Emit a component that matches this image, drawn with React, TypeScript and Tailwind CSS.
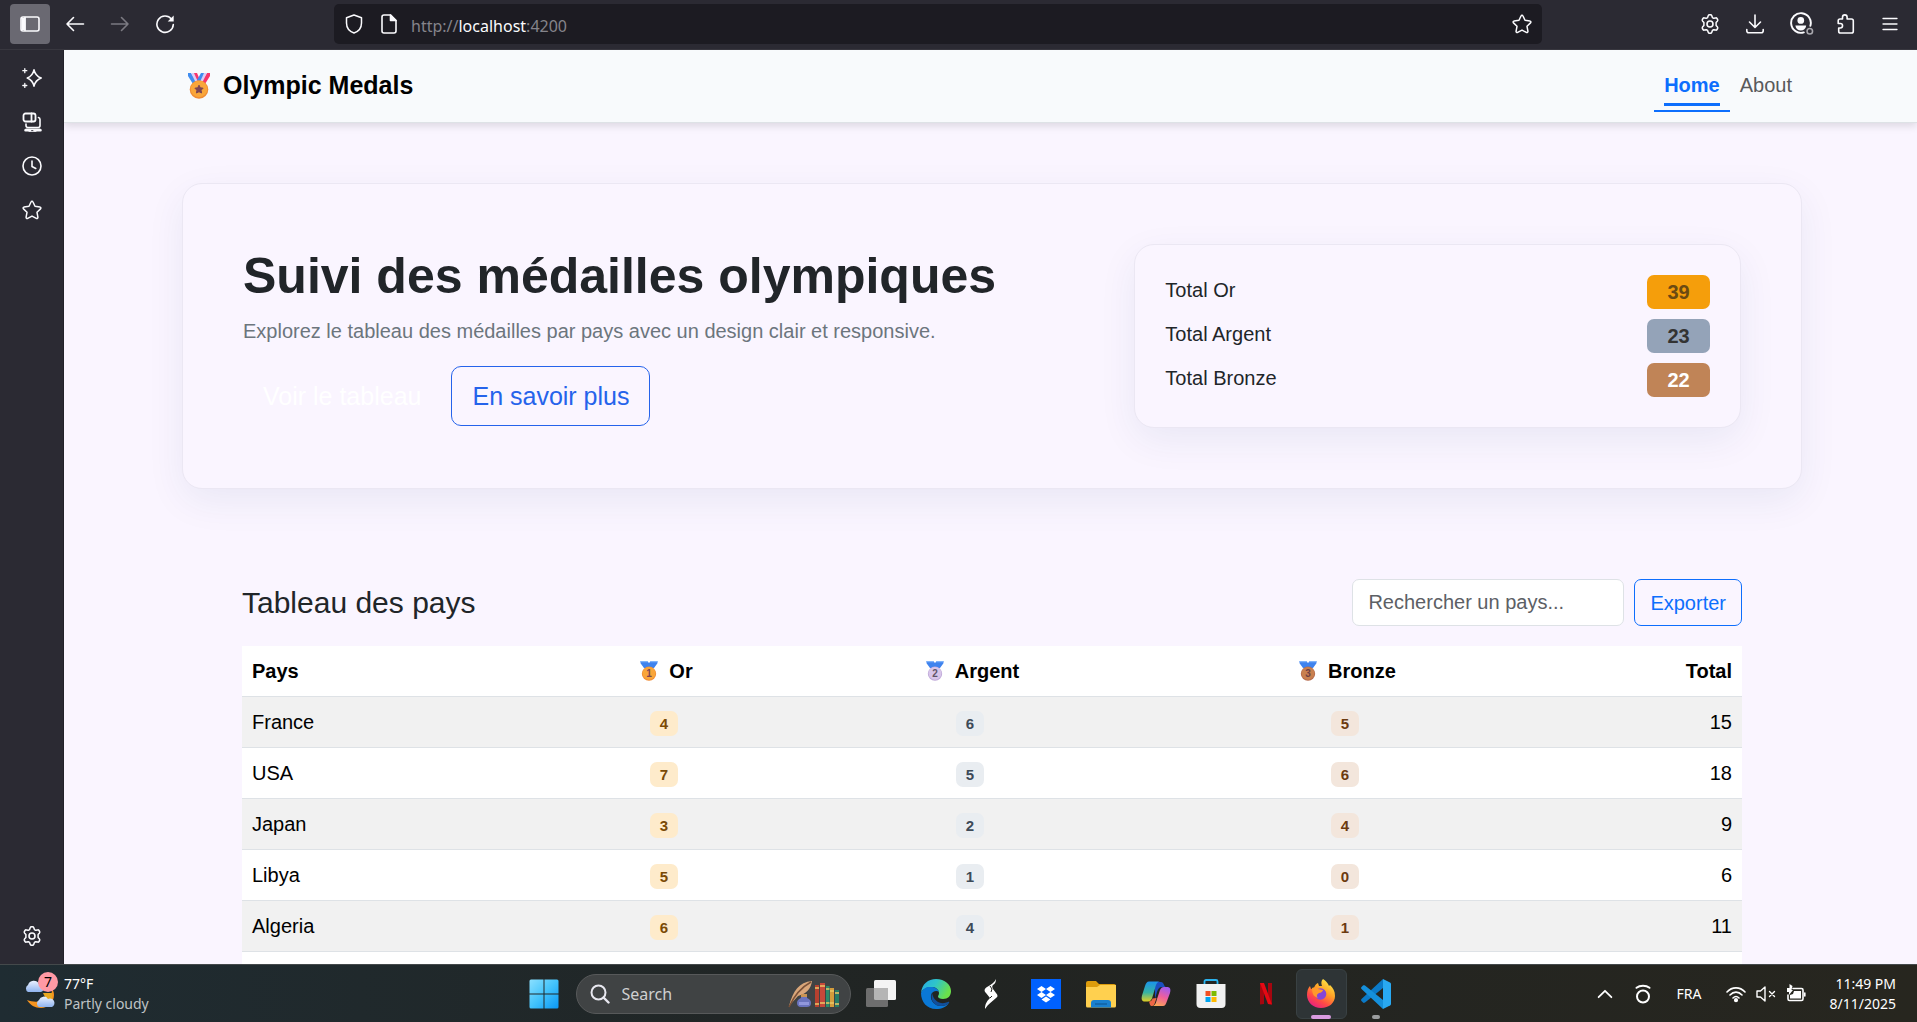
import React, { useState } from "react";

type IconProps = { children: React.ReactNode; size?: string; className?: string };

function Icon({ children, size = "size-5", className = "" }: IconProps) {
  return (
    <svg
      viewBox="0 0 20 20"
      className={`${size} shrink-0 ${className}`}
      fill="none"
      stroke="currentColor"
      strokeWidth="1.6"
      strokeLinecap="round"
      strokeLinejoin="round"
      aria-hidden="true"
    >
      {children}
    </svg>
  );
}

const starPath =
  "M10 1.3c.4 0 .8.2 1 .7l2 4.3 4.900.7c1 .1 1.300 1.200.6 1.900l-3.500 3.400.9 4.900c.2 1-.8 1.700-1.600 1.200L10 16.100l-4.300 2.300c-.8.5-1.800-.2-1.600-1.200l.9-4.900L1.500 8.900c-.7-.7-.4-1.800.6-1.900L7 6.300 9 2c.2-.5.6-.7 1-.7z";

const StarIcon = () => (
  <Icon>
    <path d={starPath} strokeWidth="1.5" />
  </Icon>
);

const GearIcon = () => (
  <Icon>
    <path
      strokeWidth="1.5"
      d="M8.300 1.600c.2-.5.600-.8 1.100-.8h1.200c.5 0 .9.300 1.100.8l.7 2 1.300.7 2-.4c.5-.1 1 .1 1.300.6l.6 1c.3.500.2 1-.1 1.400L16.100 8.500v3l1.400 1.600c.3.400.4.900.1 1.400l-.6 1c-.3.500-.8.700-1.300.6l-2-.4-1.300.7-.7 2c-.2.500-.6.800-1.100.8H9.400c-.5 0-.9-.3-1.100-.8l-.7-2-1.300-.7-2 .4c-.5.1-1-.1-1.300-.6l-.6-1c-.3-.5-.2-1 .1-1.400l1.400-1.600v-3L2.500 6.900c-.3-.4-.4-.9-.1-1.400l.6-1c.3-.5.800-.7 1.300-.6l2 .4 1.300-.7z"
    />
    <circle cx="10" cy="10" r="3" />
  </Icon>
);

function Medal({ kind, size }: { kind: "star" | "gold" | "silver" | "bronze"; size: string }) {
  const tones = {
    star: ["#f9a63a", "#f08c35", "#7d4553"],
    gold: ["#f9a63a", "#f08c35", "#7d4553"],
    silver: ["#d8c6ea", "#bfa8d8", "#5f5468"],
    bronze: ["#c9804f", "#b56a4c", "#6e3f44"],
  } as const;
  const [face, rim, ink] = tones[kind];
  const digit = { star: "", gold: "1", silver: "2", bronze: "3" }[kind];
  return (
    <svg viewBox="0 0 24 26" className={`${size} inline-block shrink-0`} aria-hidden="true">
      {kind === "star" ? (
        <>
          <path d="M1 0h3l6 9-4 2L1 3z" fill="#3f8cf0" />
          <path d="M4 0h3l5 8-3 2z" fill="#dccdf5" />
          <path d="M7 0h3l3 7-2 2z" fill="#f8356b" />
          <path d="M23 0h-3l-6 9 4 2 5-8z" fill="#f8356b" />
          <path d="M20 0h-3l-5 8 3 2z" fill="#dccdf5" />
          <path d="M17 0h-3l-4 7 3 2z" fill="#3f8cf0" />
        </>
      ) : (
        <>
          <path d="M1 0h8.500l2.500 2.500L14.500 0H23v3l-4.500 6H5.500L1 3z" fill="#3f83ee" />
          <path d="M1 0h8.500l1 1.500H1zM14.500 0H23v1.500h-9.500z" fill="#7fb3fa" />
        </>
      )}
      <circle cx="12" cy="16.500" r="9.300" fill={rim} />
      <circle cx="12" cy="16" r="8.300" fill={face} />
      {kind === "star" ? (
        <path
          d="M12 12.200l1.300 2.600 2.800.4-2 2 .5 2.800-2.600-1.300L9.400 20l.5-2.800-2-2 2.800-.4z"
          fill={ink}
          stroke={ink}
          strokeLinejoin="round"
        />
      ) : (
        <text x="12" y="20.500" textAnchor="middle" fontSize="13" fontWeight="700" fill={ink}>
          {digit}
        </text>
      )}
    </svg>
  );
}

function BrowserBar() {
  return (
    <header className="grid h-[50px] shrink-0 grid-cols-[324fr_1208fr_365fr] items-center border-b border-[#38373f] bg-[#2b2a33] px-[10px] pb-[1px] text-[#fbfbfe]">
      <div className="flex items-center">
        <button aria-label="Sidebar" className="flex size-10 items-center justify-center rounded bg-[#6a6972]">
          <Icon>
            <rect x="1" y="3" width="18" height="14" rx="2" />
            <path d="M1.500 4h4v12h-4z" fill="currentColor" stroke="none" />
            <path d="M5 3.500v13" />
          </Icon>
        </button>
        <button aria-label="Back" className="ml-[15px]">
          <Icon>
            <path d="M18.500 10H2M8.500 3.500L2 10l6.500 6.500" />
          </Icon>
        </button>
        <button aria-label="Forward" className="ml-[25px] text-[#7b7a82]" disabled>
          <Icon>
            <path d="M1.500 10H18M11.500 3.500L18 10l-6.500 6.500" />
          </Icon>
        </button>
        <button aria-label="Reload" className="ml-[25px]">
          <Icon>
            <path d="M16.500 5A8.200 8.200 0 1 0 18.300 10.500" />
            <path d="M18.700 1.500v6h-6z" fill="currentColor" stroke="none" />
          </Icon>
        </button>
      </div>
      <div className="flex h-10 items-center rounded-[5px] bg-[#1c1b22] px-[10px]">
        <Icon>
          <path d="M10 1l7.500 2.800V9c0 5-3.200 8.500-7.500 10-4.300-1.500-7.500-5-7.500-10V3.800z" strokeWidth="1.500" />
        </Icon>
        <Icon className="ml-[15px]">
          <path d="M5 1h6.500L17 6.500V17a2 2 0 0 1-2 2H5a2 2 0 0 1-2-2V3a2 2 0 0 1 2-2z" />
          <path d="M11.500 1L17 6.500h-5.500z" fill="currentColor" />
        </Icon>
        <p className="ml-3 flex-1 pt-[3px] font-['Noto_Sans','Open_Sans',sans-serif] text-[16px] text-[#85848b]">
          http://<span className="text-[#fbfbfe]">localhost</span>:4200
        </p>
        <button aria-label="Bookmark">
          <StarIcon />
        </button>
      </div>
      <div className="flex items-center justify-end gap-[25px] pr-[7px]">
        <button aria-label="Settings">
          <GearIcon />
        </button>
        <button aria-label="Downloads">
          <Icon>
            <path d="M10 1v12M4.500 8l5.500 5.500L15.500 8M1.800 15.500v1.200a2 2 0 0 0 2 2h12.400a2 2 0 0 0 2-2v-1.200" />
          </Icon>
        </button>
        <button aria-label="Account" className="-mr-1">
          <Icon size="size-6">
            <path d="M17 11.500A8.200 8.200 0 1 0 11.500 17" />
            <circle cx="9" cy="7" r="2.800" fill="currentColor" stroke="none" />
            <path d="M4.500 11.200h9c-.3 2.700-2.200 4.300-4.500 4.300s-4.200-1.600-4.500-4.300z" fill="currentColor" stroke="none" />
            <circle cx="16.500" cy="16" r="2.300" stroke="#a9a8ae" strokeWidth="1.300" />
          </Icon>
        </button>
        <button aria-label="Extensions">
          <Icon>
            <path d="M7.500 5V3.200a2.300 2.300 0 0 1 4.600 0V5h4.400a1.800 1.800 0 0 1 1.800 1.800v10.400a1.800 1.800 0 0 1-1.800 1.800h-11a1.800 1.800 0 0 1-1.800-1.800V14h1.600a2.200 2.200 0 0 0 0-4.500H3.200V6.800A1.800 1.800 0 0 1 5 5z" />
          </Icon>
        </button>
        <button aria-label="Menu">
          <Icon>
            <path d="M3 4.500h14M3 10h14M3 15.500h14" strokeWidth="1.300" />
          </Icon>
        </button>
      </div>
    </header>
  );
}

function Sidebar() {
  return (
    <aside className="flex w-16 shrink-0 flex-col items-center gap-6 border-r border-[#222129] bg-[#2b2a33] pt-[18px] pb-[18px] text-[#fbfbfe]">
      <button aria-label="AI chat">
        <Icon>
          <path d="M12 1.800c1 4.500 2.500 6.500 7.200 8.200-4.700 1.700-6.200 3.700-7.200 8.200-1-4.500-2.500-6.500-6.700-8.200C9.500 8.300 11 6.300 12 1.800z" />
          <path d="M2.800.7v4M.8 2.700h4M2.800 15.500v4M.8 17.500h4" strokeWidth="1.300" />
        </Icon>
      </button>
      <button aria-label="Synced tabs">
        <Icon>
          <rect x="1.500" y="1.500" width="12" height="8" rx="2" strokeWidth="1.800" />
          <path d="M9.500 1.500v8" strokeWidth="1.800" />
          <path d="M4 12v1.500a2 2 0 0 0 2 2h10a2 2 0 0 0 2-2V7.500a2 2 0 0 0-1.500-2" />
          <path d="M3.500 18.300h4.500M12.500 18.300h6" strokeWidth="2.600" />
          <path d="M4 17.300h14" strokeWidth="1.400" />
          <path d="M7 19.300h7" strokeWidth="1" />
        </Icon>
      </button>
      <button aria-label="History">
        <Icon>
          <circle cx="10" cy="10" r="9" />
          <path d="M10 5v5.500l3.800 2" />
        </Icon>
      </button>
      <button aria-label="Bookmarks">
        <StarIcon />
      </button>
      <button aria-label="Customize sidebar" className="mt-auto">
        <GearIcon />
      </button>
    </aside>
  );
}

function Navbar() {
  return (
    <nav className="relative border-b border-[#dee2e6] bg-[#f8fafc] pl-[3px] shadow-[0_3px_8px_rgba(0,0,0,0.12)]">
      <div className="mx-auto flex h-[72px] max-w-[1620px] items-center justify-between">
        <a href="#home" className="flex items-center gap-3 pl-[5px] text-[25px] font-bold text-black">
          <Medal kind="star" size="h-[26px] w-6" />
          Olympic Medals
        </a>
        <ul className="flex leading-[30px]">
          <li>
            <a href="#home" className="block border-b-2 border-[#0d6efd] px-[10px] pt-[10px] pb-1 font-bold text-[#0d6efd]">
              <span className="block border-b-3 border-[#0d6efd] pb-[3px]">Home</span>
            </a>
          </li>
          <li>
            <a href="#about" className="block px-[10px] pt-[10px] text-[#58595b]">
              About
            </a>
          </li>
        </ul>
      </div>
    </nav>
  );
}

const totals = [
  { label: "Total Or", value: 39, tone: "bg-[#f59e0b] text-[#6b4a12]" },
  { label: "Total Argent", value: 23, tone: "bg-[#94a3b8] text-[#333333]" },
  { label: "Total Bronze", value: 22, tone: "bg-[#c08457] text-white" },
];

function Hero() {
  return (
    <section className="grid grid-cols-12 items-center gap-[30px] rounded-[20px] border border-[#ebe7f3] bg-[#faf5ff] p-[60px] shadow-[0_12px_38px_rgba(20,50,110,0.07)]">
      <div className="col-span-7">
        <h1 className="mb-[10px] text-[50px] leading-[60px] font-bold">Suivi des médailles olympiques</h1>
        <p className="mb-5 leading-[30px] text-[#6c757d]">
          Explorez le tableau des médailles par pays avec un design clair et responsive.
        </p>
        <div className="flex items-center gap-[10px] text-[25px] leading-[38px]">
          <a href="#tableau" className="rounded-[10px] px-5 py-[10px] text-white">
            Voir le tableau
          </a>
          <a href="#about" className="rounded-[10px] border border-[#2563eb] px-5 py-[10px] text-[#2563eb]">
            En savoir plus
          </a>
        </div>
      </div>
      <ul className="col-span-5 flex flex-col gap-[10px] rounded-[20px] border border-[#ebe7f3] bg-[#faf5ff] p-[30px] shadow-[0_12px_38px_rgba(20,50,110,0.07)]">
        {totals.map((t) => (
          <li key={t.label} className="flex justify-between leading-[30px]">
            <span>{t.label}</span>
            <span className={`w-[63px] rounded-[7px] text-center leading-[34px] font-bold ${t.tone}`}>{t.value}</span>
          </li>
        ))}
      </ul>
    </section>
  );
}

const countries = [
  { name: "France", gold: 4, silver: 6, bronze: 5, total: 15 },
  { name: "USA", gold: 7, silver: 5, bronze: 6, total: 18 },
  { name: "Japan", gold: 3, silver: 2, bronze: 4, total: 9 },
  { name: "Libya", gold: 5, silver: 1, bronze: 0, total: 6 },
  { name: "Algeria", gold: 6, silver: 4, bronze: 1, total: 11 },
];

const badge = "inline-block rounded-[7px] px-[10px] py-[5px] text-[15px] leading-[15px] font-bold";

function MedalHeading({ kind, label }: { kind: "gold" | "silver" | "bronze"; label: string }) {
  return (
    <th scope="col" className="pl-1">
      <span className="flex items-center justify-center gap-[10px]">
        <Medal kind={kind} size="h-5 w-5" />
        {label}
      </span>
    </th>
  );
}

function CountryTable() {
  const [query, setQuery] = useState("");
  const rows = countries.filter((c) => c.name.toLowerCase().includes(query.toLowerCase()));
  return (
    <section id="tableau" className="px-[60px]">
      <div className="mb-5 flex items-center justify-between">
        <h2 className="text-[30px] leading-9">Tableau des pays</h2>
        <div className="flex gap-[10px] leading-[30px]">
          <input
            type="text"
            aria-label="Rechercher un pays"
            value={query}
            onChange={(e) => setQuery(e.target.value)}
            placeholder="Rechercher un pays..."
            className="h-[47px] w-[272px] rounded-[7px] border border-[#dee2e6] bg-white px-[15px] placeholder:text-[#5c6065]"
          />
          <button className="rounded-[7px] border border-[#0d6efd] px-[15px] text-[#0d6efd]">Exporter</button>
        </div>
      </div>
      <table className="w-full table-fixed bg-white leading-[30px] text-black">
        <colgroup>
          <col className="w-[301px]" />
          <col className="w-[242px]" />
          <col className="w-[370px]" />
          <col className="w-[380px]" />
          <col className="w-[207px]" />
        </colgroup>
        <thead>
          <tr className="h-[50px] border-b border-[#dee2e6]">
            <th scope="col" className="px-[10px] text-left">
              Pays
            </th>
            <MedalHeading kind="gold" label="Or" />
            <MedalHeading kind="silver" label="Argent" />
            <MedalHeading kind="bronze" label="Bronze" />
            <th scope="col" className="px-[10px] text-right">
              Total
            </th>
          </tr>
        </thead>
        <tbody>
          {rows.map((c) => (
            <tr key={c.name} className="h-[51px] border-b border-[#dee2e6] odd:bg-[#f1f1f1]">
              <td className="px-[10px]">{c.name}</td>
              <td className="text-center">
                <span className={`${badge} bg-[#feebcb] text-[#7a4a05]`}>{c.gold}</span>
              </td>
              <td className="text-center">
                <span className={`${badge} bg-[#e9edf1] text-[#3d4a58]`}>{c.silver}</span>
              </td>
              <td className="text-center">
                <span className={`${badge} bg-[#f3e6dc] text-[#6b3a10]`}>{c.bronze}</span>
              </td>
              <td className="px-[10px] text-right">{c.total}</td>
            </tr>
          ))}
          <tr className="h-[51px]">
            <td colSpan={5} />
          </tr>
        </tbody>
      </table>
    </section>
  );
}

function WeatherIcon() {
  return (
    <svg viewBox="0 0 36 36" className="size-9" aria-hidden="true">
      <defs>
        <linearGradient id="cloud" x1="0" y1="0" x2="0" y2="1">
          <stop offset="0" stopColor="#eaf1ff" />
          <stop offset="1" stopColor="#8fb3ee" />
        </linearGradient>
      </defs>
      <path d="M3 24c3 5 8 8 14 8 7 0 13-6 13-13 0-3-1-5-2-6 0 7-3 11-9 12-6 1-11 1-16-1z" fill="#f5941f" />
      <path d="M19 17h9v6h-6z" fill="#e9a820" />
      <path d="M4 16a4 4 0 0 1 0-7 6 6 0 0 1 11-1 4 4 0 0 1 2 8z" fill="url(#cloud)" />
      <path d="M15 31a4 4 0 0 1 0-7 5 5 0 0 1 9-1 4 4 0 0 1 4 8z" fill="url(#cloud)" />
    </svg>
  );
}

function AppButton({ label, active, children }: { label: string; active?: boolean; children: React.ReactNode }) {
  return (
    <button
      aria-label={label}
      className={`mx-[2px] flex h-[50px] w-[51px] items-center justify-center rounded-md ${active ? "border border-[#394143] bg-[#2e3436]" : ""}`}
    >
      <svg viewBox="0 0 30 30" className="size-[30px]" aria-hidden="true">
        {children}
      </svg>
    </button>
  );
}

function Taskbar() {
  return (
    <footer className="flex h-[58px] shrink-0 items-center border-t border-[#44494b] bg-linear-to-r from-[#1f2c32] via-[#212422] to-[#27261f] pl-[3px] font-['Noto_Sans','Open_Sans',sans-serif] text-[15px] text-white">
      <div className="flex flex-1 items-center pl-[21px]">
        <div className="relative">
          <WeatherIcon />
          <span className="absolute -top-[4px] left-[14px] flex size-5 items-center justify-center rounded-full bg-[#ff99a4] text-[14px] text-black">
            7
          </span>
        </div>
        <div className="ml-1 text-[14px] leading-5">
          <p>77°F</p>
          <p className="text-[#bfc3c5]">Partly cloudy</p>
        </div>
      </div>
      <div className="flex items-center">
        <AppButton label="Start">
          <defs>
            <linearGradient id="win" x1="0" y1="0" x2="1" y2="1">
              <stop offset="0" stopColor="#8be0ff" />
              <stop offset=".5" stopColor="#43c3fb" />
              <stop offset="1" stopColor="#0a97f5" />
            </linearGradient>
          </defs>
          <path d="M2 .5h12.500v14H.500V2A1.500 1.500 0 0 1 2 .5zM15.500.5H28A1.500 1.500 0 0 1 29.500 2v12.500h-14zM.5 15.500h14v14H2A1.500 1.500 0 0 1 .5 28zM15.500 15.500h14V28a1.500 1.500 0 0 1-1.500 1.500H15.500z" fill="url(#win)" />
        </AppButton>
        <div className="mr-[3px] ml-1 flex h-10 w-[275px] items-center rounded-full border border-[#57595a] bg-[#404344] pr-[10px] pl-[13px]">
          <Icon className="text-[#e8e8f0]">
            <circle cx="8.500" cy="8.500" r="7" strokeWidth="2" />
            <path d="M13.500 13.500l5 5" strokeWidth="2.400" />
          </Icon>
          <input
            type="text"
            aria-label="Search"
            placeholder="Search"
            className="ml-3 h-8 w-0 flex-1 bg-transparent text-[16px] leading-6 placeholder:text-[#cfd0d1]"
          />
          <svg viewBox="0 0 54 30" className="h-[30px] w-[54px]" aria-hidden="true">
            <path d="M3 27C7 12 13 3 26 2c-1 8-6 13-14 15z" fill="#d9a679" />
            <path d="M3 28C8 17 14 9 25 3" stroke="#7a5138" strokeWidth="1.500" fill="none" />
            <path d="M15 15h6v4c3 1 4 3 4 5 0 3-2 4-4 4h-6c-3 0-4-2-4-4s1-4 4-5z" fill="#6a73bd" />
            <path d="M15 15h6v3h-6z" fill="#c89352" />
            <path d="M13 23h10v3H13z" fill="#9197dc" />
            <path d="M29 6h4v22h-4z" fill="#b5402f" />
            <path d="M34 4h5v24h-5z" fill="#c6483a" />
            <path d="M40 7h3.500v21H40z" fill="#2d8a6a" />
            <path d="M44 9h4v19h-4z" fill="#d39c3c" />
            <path d="M49 11h4v17h-4z" fill="#277c66" />
            <path d="M29 9h4m-4 16h4m1-18h5m-5 17h5m1-14h3.500m-3.500 14H43.500M44 12h4m-4 12h4m1-10h4m-4 11h4" stroke="#ecc765" strokeWidth="1.500" />
          </svg>
        </div>
        <AppButton label="Task view">
          <rect x="8" y="1" width="22" height="20" rx="1.500" fill="#f4f4f4" />
          <rect x="0" y="9" width="22" height="19" rx="1.500" fill="#6e6e6e" />
          <path d="M8 9h14v12H9.500A1.500 1.500 0 0 1 8 19.500z" fill="#b5b5b5" />
        </AppButton>
        <AppButton label="Edge">
          <defs>
            <linearGradient id="edgeTop" x1="0" y1="0" x2="1" y2=".4">
              <stop offset="0" stopColor="#25a8e8" />
              <stop offset=".5" stopColor="#2fc5c9" />
              <stop offset="1" stopColor="#6be04a" />
            </linearGradient>
          </defs>
          <path d="M0 14C1 5 7 0 15 0c9 0 15 6 15 12 0 5-3 8-8 8-3 0-5-1-5-2.500 0-1 1-1.500 1-3.500 0-3-3-6-7-6-6 0-10 3-11 6z" fill="url(#edgeTop)" />
          <path d="M0 14C2 9 6 7.500 10 8c4 0 7 2 8 5-2-2-7-1-8 3-1 6 4 11 10 11 3 0 6-1 8-3-3 4-7 6-13 6C6 30 0 23 0 14z" fill="#0a78d6" />
          <path d="M11 14c-2 7 2 13 9 13 3 0 6-1 8-3 .5-1 0-1.500-1-1-7 3-14 0-16-9z" fill="#114f9c" />
        </AppButton>
        <AppButton label="Streamlabs">
          <path d="M20 0c-1 3-4 5-9 8-3 2-3 4-1 6l4 5c-4 4-5 7-5 11 3-5 8-8 11-11 2-1 2-3 0-5l-3-4c-1-2-1-3 0-4 2-1 3-3 3-6z" fill="#fff" />
          <path d="M14 7l2 3-1 3M14 19l2-2" stroke="#232420" fill="none" />
        </AppButton>
        <AppButton label="Dropbox">
          <path d="M0 0h30v30H0z" fill="#0061fe" />
          <path d="M10.500 7l4.500 3-4.500 3L6 10zM19.500 7l4.500 3-4.500 3-4.500-3zM10.500 13l4.500 3-4.500 3L6 16zM19.500 13l4.500 3-4.500 3-4.500-3zM15 17.500l4.500 3-4.500 3-4.500-3z" fill="#fff" />
        </AppButton>
        <AppButton label="File Explorer">
          <path d="M0 4a2 2 0 0 1 2-2h8l3 3h15a2 2 0 0 1 2 2v5H0z" fill="#dd9c0c" />
          <path d="M0 8h11l3-2h16v21a1.500 1.500 0 0 1-1.500 1.500h-27A1.500 1.500 0 0 1 0 27z" fill="#ffd04f" />
          <path d="M5 28.500V24a3 3 0 0 1 3-3h14a3 3 0 0 1 3 3v4.500z" fill="#1a80cf" />
          <path d="M9 25h12" stroke="#0c528e" />
        </AppButton>
        <AppButton label="Copilot">
          <defs>
            <linearGradient id="copA" x1=".3" y1="0" x2=".3" y2="1">
              <stop offset="0" stopColor="#1a93ec" />
              <stop offset=".55" stopColor="#37b3a2" />
              <stop offset="1" stopColor="#e2cf22" />
            </linearGradient>
            <linearGradient id="copB" x1=".7" y1="0" x2=".3" y2="1">
              <stop offset="0" stopColor="#a15af0" />
              <stop offset=".5" stopColor="#ef5f9c" />
              <stop offset="1" stopColor="#fba755" />
            </linearGradient>
          </defs>
          <path d="M14 3h6c3 0 3 5 5 5h-4c-3 0-4 2-5 5l-2 7" fill="#1b4fc0" />
          <path d="M8 2.500h11c-3 0-4 3-5 7l-3 10c-1 2-2 3-4 3H4c-3 0-4-2-3-6L4 7c1-3 2-4.500 4-4.500z" fill="url(#copA)" />
          <path d="M22 27H11c3 0 4-3 5-7l3-9c1-2 2-3 4-3h3c3 0 4 2 3 6l-3 8c-1 3-2 5-4 5z" fill="url(#copB)" />
          <path d="M8 22.500c2 0 3-1 3.500-3l4-.5-2 6c-1 1.500-1.500 2-3 2-2 0-2-4.500-2.500-4.500z" fill="#ee6746" />
        </AppButton>
        <AppButton label="Microsoft Store">
          <path d="M8.500 6V2.500A1.500 1.500 0 0 1 10 1h10a1.500 1.500 0 0 1 1.500 1.500V6" fill="none" stroke="#2bb3ee" strokeWidth="1.800" />
          <path d="M.5 5h29v20a4 4 0 0 1-4 4h-21a4 4 0 0 1-4-4z" fill="#f1f1f1" />
          <path d="M9.500 12h5v5h-5z" fill="#f25022" />
          <path d="M15.500 12h5v5h-5z" fill="#7fba00" />
          <path d="M9.500 18h5v5h-5z" fill="#00a4ef" />
          <path d="M15.500 18h5v5h-5z" fill="#ffb900" />
        </AppButton>
        <AppButton label="Netflix">
          <path d="M9 4h4v21l-4 .5zM17 4h4v21.500l-4-.5z" fill="#a5060f" />
          <path d="M9 4h4l8 21.500-4-.5z" fill="#e50914" />
        </AppButton>
        <div className="relative">
          <AppButton label="Firefox" active>
            <defs>
              <linearGradient id="fox" x1=".8" y1="0" x2=".2" y2="1">
                <stop offset="0" stopColor="#fff04a" />
                <stop offset=".4" stopColor="#ffa026" />
                <stop offset=".7" stopColor="#ff4a45" />
                <stop offset="1" stopColor="#e31a8b" />
              </linearGradient>
            </defs>
            <path d="M17 0c3 2 5 4 6 7l1-1c3 3 5 6 5 11 0 7-6 12-14 12S1 23 1 16c0-4 1-7 3-9l1 3 3-1c1-3 2-4 4-5l1 3h3c-1-3-1-5 1-7z" fill="url(#fox)" />
            <circle cx="14.500" cy="15" r="5.800" fill="#8446d8" />
            <path d="M6 9c2-1 4-1 6 1l5 1c0 1-2 3-4 3-2 1-3 3-1 5-4-1-6-4-6-10z" fill="#ff9a2b" />
          </AppButton>
          <span className="absolute bottom-0 left-[17px] h-1 w-5 rounded-full bg-[#d89ae0]" />
        </div>
        <div className="relative">
          <AppButton label="Visual Studio Code">
            <path d="M22 0l7 3.500a2 2 0 0 1 1 1.500v20a2 2 0 0 1-1 1.500L22 30z" fill="#29a9f2" />
            <path d="M22 0v9L4 23.500c-1 .5-1.500.5-2 0L.5 22c-.7-.7-.5-1.500 0-2z" fill="#0b7ac8" />
            <path d="M22 30v-9L4 6.500C3 6 2.500 6 2 6.500L.5 8c-.7.700-.5 1.500 0 2z" fill="#1590dc" />
          </AppButton>
          <span className="absolute bottom-0 left-[23px] h-1 w-2 rounded-full bg-[#9a9d9e]" />
        </div>
      </div>
      <div className="flex flex-1 items-center justify-end pr-[21px]">
        <button aria-label="Show hidden icons" className="mr-5">
          <Icon size="size-4">
            <path d="M2 14l8-8 8 8" strokeWidth="2.200" />
          </Icon>
        </button>
        <Icon className="mr-6">
          <circle cx="10" cy="12.500" r="6" strokeWidth="2" />
          <path d="M3.500 3.800C7 1.200 13 1.200 16.500 3.800" strokeWidth="2" />
        </Icon>
        <button className="mr-6 text-[14px]">FRA</button>
        <Icon className="mr-[10px]">
          <path d="M1 8c5-5.500 13-5.500 18 0M4 11c3.500-3.800 8.500-3.800 12 0M7 14c2-2 4-2 6 0" />
          <circle cx="10" cy="16.200" r="1.300" fill="currentColor" />
        </Icon>
        <Icon className="mr-[10px]">
          <path d="M1 7h3.500L9 3v14l-4.500-4H1zM13.500 7.500l5 5M18.500 7.500l-5 5" strokeWidth="1.400" />
        </Icon>
        <Icon className="mr-6">
          <path d="M7 4.500h8.500A1.500 1.500 0 0 1 17 6v9a1.500 1.500 0 0 1-1.500 1.500h-12A1.500 1.500 0 0 1 2 15v-4M18.800 9v3" />
          <path d="M8 7h7v7.500H4V11l3-1z" fill="currentColor" stroke="none" />
          <path d="M3.500 0v4H1v4h2v3l4-5H5.500l1-4z" fill="currentColor" stroke="none" />
        </Icon>
        <div className="text-right text-[14px] leading-5">
          <p>11:49 PM</p>
          <p>8/11/2025</p>
        </div>
      </div>
    </footer>
  );
}

export default function App() {
  return (
    <div className="flex h-screen flex-col overflow-hidden font-['Liberation_Sans',Arial,sans-serif] text-[20px] text-[#212529]">
      <BrowserBar />
      <div className="flex min-h-0 flex-1">
        <Sidebar />
        <main className="min-w-0 flex-1 overflow-hidden bg-[#faf5ff]">
          <Navbar />
          <div className="pl-[3px]">
            <div className="mx-auto flex max-w-[1620px] flex-col gap-[90px] pt-[60px]">
              <Hero />
              <CountryTable />
            </div>
          </div>
        </main>
      </div>
      <Taskbar />
    </div>
  );
}
